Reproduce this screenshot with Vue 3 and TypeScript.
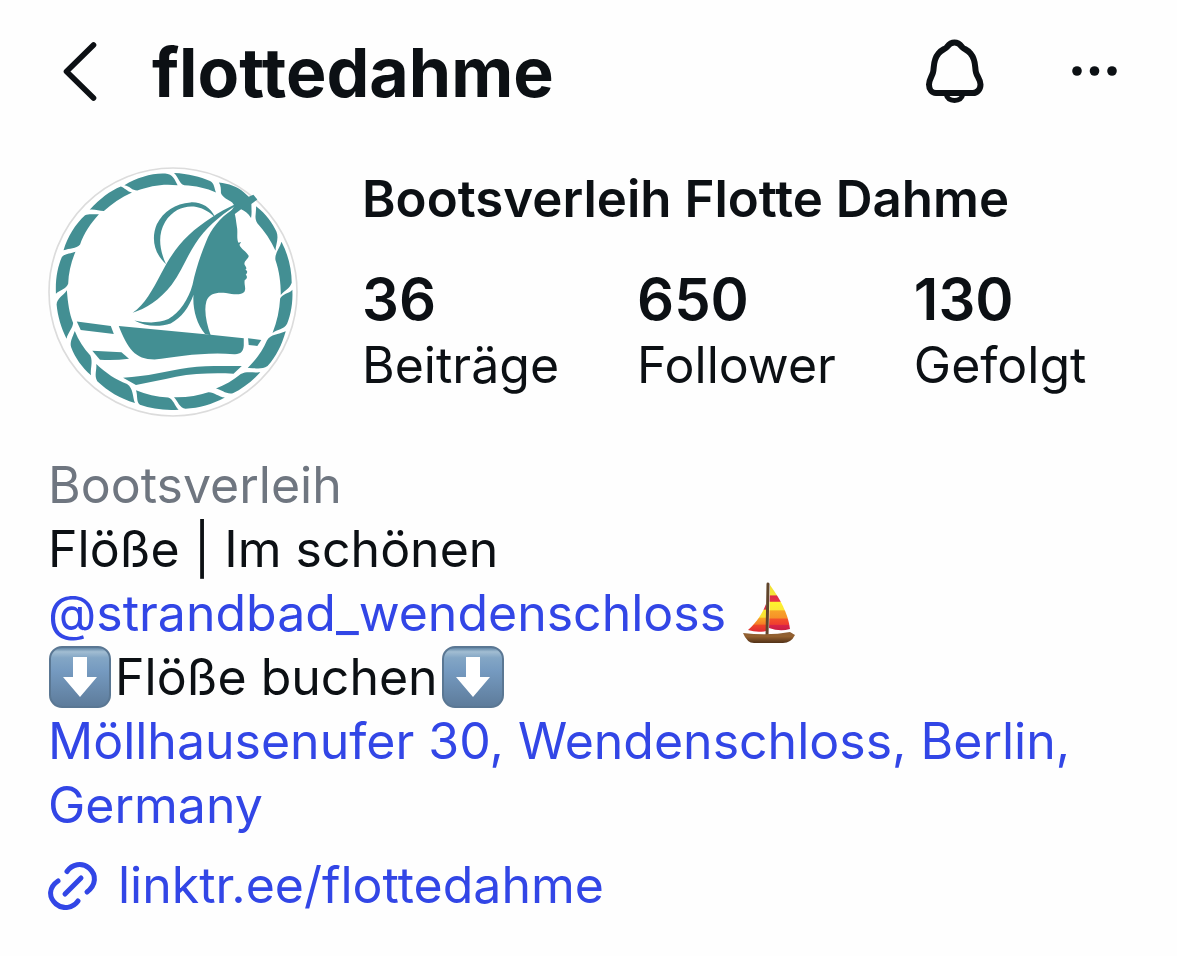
<script setup lang="ts">
interface Stat {
  value: string
  label: string
}

const stats: Stat[] = [
  { value: '36', label: 'Beiträge' },
  { value: '650', label: 'Follower' },
  { value: '130', label: 'Gefolgt' },
]

const ropeSegments: string[] = [
  'M251 75 C290 52 335 38 374 40 C399 42 402 58 412 75 C365 70 330 77 290 91 C274 91 268 78 251 75Z',
  'M401 38 C445 40 480 50 510 62 C524 70 522 82 528 97 C500 84 465 76 432 75 C416 70 414 49 401 38Z',
  'M146 149 C177 116 208 92 240 79 C251 82 260 95 274 97 C240 112 212 132 189 153 C174 153 162 147 146 149Z',
  'M67 272 C79 231 102 194 132 166 C145 160 159 164 174 163 C149 190 129 220 117 254 C105 268 85 264 67 272Z',
  'M44 403 C42 358 49 322 62 292 C73 280 89 282 103 276 C90 307 82 340 81 373 C75 389 57 391 44 403Z',
  'M77 393 C80 430 84 462 96 492 C95 507 81 520 76 539 C60 508 49 470 46 436 C47 417 66 410 77 393Z',
  'M101 516 C112 544 128 568 148 590 C157 610 147 630 150 650 C122 625 102 597 90 565 C85 549 95 533 101 516Z',
  'M166 616 C197 645 224 663 259 676 C279 689 275 714 283 734 C237 720 201 698 169 668 C159 651 168 634 166 616Z',
  'M286 695 C316 707 349 715 383 717 C400 722 403 743 415 754 C371 757 333 751 298 739 C286 730 292 710 286 695Z',
  'M401 716 C440 717 475 711 505 701 C522 700 535 715 555 717 C516 738 477 749 436 751 C418 749 412 727 401 716Z',
  'M528 690 C556 679 581 664 603 646 C621 636 640 643 662 641 C635 670 607 691 579 704 C559 708 545 694 528 690Z',
  'M624 628 C650 602 669 576 682 545 C694 525 716 527 739 517 C727 559 710 594 684 622 C665 634 645 627 624 628Z',
  'M759 391 C761 431 754 466 743 494 C733 512 713 510 699 522 C713 488 720 452 722 418 C729 402 748 404 759 391Z',
  'M726 246 C747 286 757 330 757 370 C751 389 737 391 724 407 C724 370 719 333 708 302 C704 281 722 265 726 246Z',
  'M649 139 C680 163 699 190 711 216 C719 237 708 255 708 273 C694 242 675 214 653 190 C642 173 651 157 649 139Z',
]
</script>

<template>
  <main class="profile">
    <header class="topbar">
      <button class="icon-button back" type="button" aria-label="Zurück">
        <svg width="40" height="64" viewBox="0 0 40 64" fill="none">
          <path d="M33.500 5 6.500 31.500 33.500 58" stroke="currentColor" stroke-width="5.600" stroke-linecap="round" stroke-linejoin="round" />
        </svg>
      </button>
      <h1 class="handle">flottedahme</h1>
      <button class="icon-button" type="button" aria-label="Benachrichtigungen">
        <svg width="60" height="66" viewBox="0 0 60 66" fill="none">
          <path
            d="M29.500 3.500 C25 3.500 23.500 6 21.500 8.500 C19 10.500 16 11 13.500 14.500 C7.500 21.500 9.500 28.500 8 33.500 C7 37.500 4 40.500 4 45.500 C4 50.500 7 54 11 54 L48 54 C52 54 55.500 50.500 55.500 45.500 C55.500 40.500 52 37.500 51 33.500 C49.500 28.500 51.500 21.500 45.500 14.500 C43 11 40 10.500 37.500 8.500 C35.500 6 34 3.500 29.500 3.500Z"
            stroke="currentColor"
            stroke-width="6"
            stroke-linejoin="round"
          />
          <path d="M21 55 C22 59 25 61.500 29.500 61.500 C34 61.500 37 59 38 55" stroke="currentColor" stroke-width="5" />
        </svg>
      </button>
      <button class="icon-button more" type="button" aria-label="Weitere Optionen">
        <svg width="48" height="12" viewBox="0 0 48 12" fill="currentColor">
          <circle cx="6" cy="5" r="4.800" />
          <circle cx="23.500" cy="5" r="4.800" />
          <circle cx="41" cy="5" r="4.800" />
        </svg>
      </button>
    </header>

    <section class="summary">
      <svg class="avatar" viewBox="20 20 756 756" role="img" aria-label="Profilbild Flotte Dahme">
        <circle cx="398" cy="398" r="375" fill="#fff" stroke="#dcdcdc" stroke-width="5" />
        <g fill="#438f93">
          <path v-for="segment in ropeSegments" :key="segment" :d="segment" />
          <path d="M537 67 C566 70 594 80 612 96 L627 110 L641 104 L653 118 L635 132 C635 147 637 158 634 174 C625 160 616 153 604 148 L584 163 L566 165 L584 137 L577 127 C563 119 547 111 543 99 C543 86 543 77 537 67Z" />
          <path d="M525 172 C512 141 482 125 451 127 C405 130 369 154 349 193 C331 236 341 281 377 314 C357 271 351 225 374 186 C399 147 437 135 469 141 C493 146 509 157 525 172Z" />
          <path d="M586 133 C539 155 487 188 446 226 C407 262 384 301 361 344 C335 393 313 435 276 461 C313 449 360 421 394 376 C424 335 440 290 466 251 C495 207 538 169 586 138Z" />
          <path d="M576 150 C539 174 513 208 498 246 C479 292 466 333 457 376 C445 420 418 460 384 480 C352 494 315 491 281 484 C313 502 355 505 391 493 C424 475 446 445 460 406 C457 447 468 492 495 525 L512 529 C499 494 491 453 499 426 C507 402 531 398 558 401 C583 406 604 408 614 397 C620 387 612 374 615 362 C622 358 624 350 618 346 C624 340 624 334 617 331 C624 325 616 320 614 314 C613 303 626 298 627 289 C621 276 602 267 599 255 L604 247 L596 249 C589 235 595 217 591 199 C588 181 588 169 582 154Z" />
          <path d="M234 501 L512 527 L612 538 L612 560 C611 578 602 587 583 586 C494 578 408 594 342 602 C283 602 261 570 234 501Z" />
          <path d="M107 487 L210 501 L219 525 L119 513Z" />
          <path d="M625 538 L665 543 L653 561 L627 558Z" />
          <path d="M154 576 L242 580 L265 600 C235 604 206 605 177 603Z" />
          <path d="M247 657 C321 654 378 636 444 627 C501 620 551 622 606 622 L581 645 C524 642 463 644 407 654 C365 663 326 671 286 679Z" />
        </g>
      </svg>

      <div class="details">
        <h2 class="name">Bootsverleih Flotte Dahme</h2>
        <ul class="stats">
          <li v-for="stat in stats" :key="stat.label" class="stat">
            <strong class="value">{{ stat.value }}</strong>
            <span class="label">{{ stat.label }}</span>
          </li>
        </ul>
      </div>
    </section>

    <section class="bio">
      <p class="category">Bootsverleih</p>
      <p>Flöße | Im schönen</p>
      <p class="row">
        <a href="#strandbad">@strandbad_wendenschloss</a>
        <svg class="boat" width="54" height="62" viewBox="0 0 54 62" role="img" aria-label="Segelboot">
          <defs>
            <linearGradient id="sail-main" x1="0" y1="0" x2="0" y2="1">
              <stop offset="0" stop-color="#f2df32" />
              <stop offset=".22" stop-color="#f4e63b" />
              <stop offset=".24" stop-color="#df2c48" />
              <stop offset=".36" stop-color="#e43343" />
              <stop offset=".38" stop-color="#fff22d" />
              <stop offset=".55" stop-color="#fbe837" />
              <stop offset=".57" stop-color="#f8a229" />
              <stop offset=".73" stop-color="#f69128" />
              <stop offset=".75" stop-color="#f4512b" />
              <stop offset=".87" stop-color="#ef3e2f" />
              <stop offset=".89" stop-color="#d9234a" />
              <stop offset="1" stop-color="#c91e42" />
            </linearGradient>
            <linearGradient id="sail-jib" x1="0" y1="0" x2="0" y2="1">
              <stop offset="0" stop-color="#cd2845" />
              <stop offset=".19" stop-color="#d72b43" />
              <stop offset=".21" stop-color="#f7e82f" />
              <stop offset=".47" stop-color="#f9e335" />
              <stop offset=".52" stop-color="#f8a126" />
              <stop offset=".72" stop-color="#f47c27" />
              <stop offset=".77" stop-color="#ee4427" />
              <stop offset="1" stop-color="#df2935" />
            </linearGradient>
            <linearGradient id="hull" x1="0" y1="0" x2="0" y2="1">
              <stop offset="0" stop-color="#8d6037" />
              <stop offset=".4" stop-color="#94602e" />
              <stop offset="1" stop-color="#513118" />
            </linearGradient>
          </defs>
          <path d="M28 3 C38 17 46 31 48 47 Q38 50 27 46Z" fill="url(#sail-main)" />
          <path d="M24 22 C20 33 13 42 6 48 Q15 51 24 49Z" fill="url(#sail-jib)" />
          <path d="M26 2 25 55" stroke="#60442b" stroke-width="3" stroke-linecap="round" />
          <path d="M1 51 Q27 54 48 50 L53 53 Q49 61 41 61 H12 Q5 61 1 51Z" fill="url(#hull)" />
        </svg>
      </p>
      <p class="row booking">
        <svg class="arrow" width="62" height="62" viewBox="0 0 62 62" role="img" aria-label="Pfeil nach unten">
          <defs>
            <linearGradient id="tile" x1="0" y1="0" x2="0" y2="1">
              <stop offset="0" stop-color="#547b9d" />
              <stop offset=".08" stop-color="#a2bdd2" />
              <stop offset=".18" stop-color="#83a6c5" />
              <stop offset=".4" stop-color="#759ac0" />
              <stop offset="1" stop-color="#5d7b9a" />
            </linearGradient>
          </defs>
          <rect x="1" y="1" width="60" height="60" rx="12" fill="url(#tile)" stroke="#5a7793" stroke-width="2" />
          <path d="M24 11 H38 V31 H48 L31 51 14 31 H24Z" fill="#fff" />
        </svg>
        <span>Flöße buchen</span>
        <svg class="arrow" width="62" height="62" viewBox="0 0 62 62" role="img" aria-label="Pfeil nach unten">
          <rect x="1" y="1" width="60" height="60" rx="12" fill="url(#tile)" stroke="#5a7793" stroke-width="2" />
          <path d="M24 11 H38 V31 H48 L31 51 14 31 H24Z" fill="#fff" />
        </svg>
      </p>
      <p><a href="#adresse">Möllhausenufer 30, Wendenschloss, Berlin, Germany</a></p>
    </section>

    <a class="website" href="#linktree">
      <svg width="50" height="50" viewBox="0 0 50 50" fill="none" stroke="currentColor" stroke-width="5" stroke-linecap="round">
        <path d="M19 11.500 C24 4 34 2 41 8 C49 15 48 25 39 32" />
        <path d="M10 21 C1 27 0 37 8 44 C15 50 25 48 30 41" />
        <path d="M17 34 33 18" />
      </svg>
      <span>linktr.ee/flottedahme</span>
    </a>
  </main>
</template>

<style>
body {
  margin: 0;
  background: #fefefe;
}
</style>

<style scoped>
.profile {
  box-sizing: border-box;
  padding: 32px 48px;
  color: #0c1014;
  font-family: Inter, "Liberation Sans", sans-serif;
  font-size: 50px;
  font-feature-settings: "calt" 0;
  line-height: 64px;
}

.topbar {
  display: flex;
  align-items: center;
  height: 80px;
  padding: 0 10px 0 12px;
}

.icon-button {
  display: flex;
  padding: 0;
  border: 0;
  background: none;
  color: inherit;
  cursor: pointer;
}

.handle {
  flex: 1;
  margin: 0 0 0 52px;
  font-size: 68px;
  font-weight: 700;
  line-height: 80px;
}

.more {
  margin-left: 86px;
}

.summary {
  display: flex;
  gap: 64px;
  margin-top: 55px;
}

.avatar {
  flex: none;
  width: 250px;
  height: 250px;
}

.name {
  margin: 0;
  font-size: 51px;
  font-weight: 600;
  line-height: 64px;
}

.stats {
  display: flex;
  gap: 78px;
  margin: 34px 0 0;
  padding: 0;
  list-style: none;
}

.stat {
  display: flex;
  flex-direction: column;
}

.value {
  font-size: 58px;
  font-weight: 600;
  line-height: 68px;
}

.bio {
  margin-top: 36px;
}

.bio p {
  margin: 0;
}

.category {
  color: #6f7680;
}

.row {
  display: flex;
  align-items: center;
  gap: 16px;
}

.booking {
  gap: 4px;
  padding-left: 1px;
}

.boat,
.arrow {
  flex: none;
}

a {
  color: #3246e6;
  text-decoration: none;
}

.website {
  display: flex;
  align-items: center;
  gap: 20px;
  margin-top: 16px;
}
</style>
